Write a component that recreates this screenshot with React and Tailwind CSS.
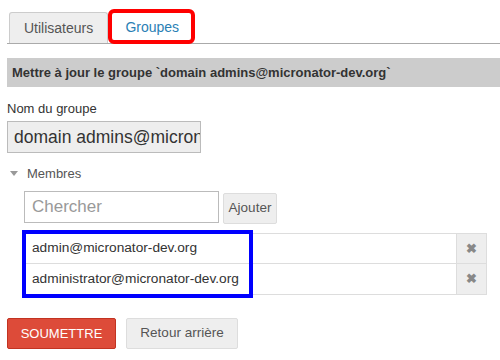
import React, { useState } from 'react';

const members = ['admin@micronator-dev.org', 'administrator@micronator-dev.org'];

export default function App() {
  const [search, setSearch] = useState('');

  return (
    <div className="w-[500px] h-[360px] bg-white overflow-hidden font-['Liberation_Sans',Arial,sans-serif] text-[#333]">
      <div className="pt-[12px] pl-[7px]">
        {/* tabs */}
        <div className="flex items-end border-b border-[#aaa] h-[32px]">
          <div className="ml-[2px] h-[31px] px-[14px] flex items-center text-[14px] text-[#555] bg-[#eee] border border-[#ccc] border-b-0 rounded-t-[3px]">
            Utilisateurs
          </div>
          <div className="relative ml-[1px] h-[32px] w-[86px] flex items-center justify-center text-[14px] text-[#2a7fb5] bg-white">
            Groupes
            <div className="absolute left-[-1px] top-[-2px] w-[87px] h-[35px] border-[4px] border-[#f00] rounded-[6px]" />
          </div>
        </div>

        {/* header */}
        <div className="mt-[14px] h-[29px] bg-[#ccc] flex items-center pl-[5px] text-[13px] font-bold text-[#333]">
          Mettre à jour le groupe `domain admins@micronator-dev.org`
        </div>

        <div className="mt-[14px] text-[13px] leading-[15px] text-[#333]">Nom du groupe</div>
        <div className="mt-[5px] w-[194px] h-[32px] bg-[#eee] border border-[#bbb] flex items-center pl-[6px] text-[17.5px] text-[#333] whitespace-nowrap overflow-hidden">
          domain admins@micronator-dev.org
        </div>

        <div className="mt-[13px] h-[15px] flex items-center text-[13px] leading-[15px] text-[#555]">
          <span className="ml-[3px] w-0 h-0 border-l-[4px] border-r-[4px] border-t-[5px] border-l-transparent border-r-transparent border-t-[#999]" />
          <span className="ml-[9px]">Membres</span>
        </div>

        <div className="ml-[17px] mt-[10px] flex items-end gap-[4px]">
          <input
            value={search}
            onChange={e => setSearch(e.target.value)}
            placeholder="Chercher"
            className="w-[195px] h-[32px] border border-[#bbb] pl-[7px] text-[17px] placeholder-[#999] outline-none"
          />
          <button className="h-[31px] w-[54px] mb-[-1px] bg-[#eee] border border-[#ddd] rounded-[2px] text-[13.5px] text-[#555]">
            Ajouter
          </button>
        </div>

        <div className="relative ml-[17px] mt-[10px] w-[463px]">
          {members.map((m, i) => (
            <div key={m} className={`flex border-b border-[#ddd] ${i === 0 ? 'h-[31px] border-t' : 'h-[31px]'}`}>
              <div className="flex-1 flex items-center pl-[7px] text-[13.7px] text-[#333] border-l border-[#ddd]">{m}</div>
              <div className="w-[31px] bg-[#eee] border-l border-r border-[#ddd] flex items-center justify-center text-[#888] text-[13px] font-bold">
                ✖
              </div>
            </div>
          ))}
          <div className="absolute left-[-2px] top-[-3px] w-[231px] h-[68px] border-[4px] border-[#00f]" />
        </div>

        <div className="mt-[23px] flex gap-[10px]">
          <button className="w-[109px] h-[31px] bg-[#dd4b39] border border-[#c23321] rounded-[2px] text-[13px] text-white">
            SOUMETTRE
          </button>
          <button className="w-[112px] h-[31px] bg-[#eee] border border-[#ddd] rounded-[2px] text-[13.5px] text-[#555]">
            Retour arrière
          </button>
        </div>
      </div>
    </div>
  );
}
